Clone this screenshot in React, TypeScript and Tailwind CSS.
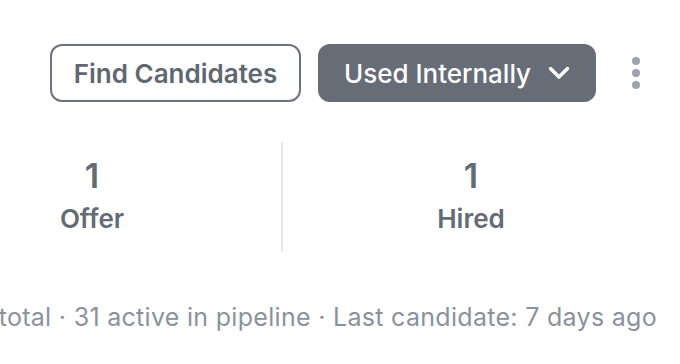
export default function App() {
  return (
    <div className="w-[680px] h-[364px] bg-white overflow-hidden font-['Inter',sans-serif]">
      {/* Header actions */}
      <div className="flex items-center justify-end pt-[44px] pr-[40px]">
        <button className="h-[58px] w-[251px] rounded-[12px] border-2 border-[#6b7280] text-[#5f6771] text-[26px] font-semibold">
          Find Candidates
        </button>
        <button className="ml-[17px] h-[58px] w-[278px] rounded-[12px] bg-[#666d77] text-white text-[26px] font-medium flex items-center justify-center gap-[17px]">
          Used Internally
          <svg width="22" height="14" viewBox="0 0 22 14" fill="none">
            <polyline
              points="2.5,2.5 11,11 19.5,2.5"
              stroke="white"
              strokeWidth="3.5"
              strokeLinecap="round"
              strokeLinejoin="round"
            />
          </svg>
        </button>
        <div className="ml-[36px] flex flex-col gap-[4px]">
          <span className="w-[8px] h-[8px] rounded-full bg-[#9ca3af]" />
          <span className="w-[8px] h-[8px] rounded-full bg-[#9ca3af]" />
          <span className="w-[8px] h-[8px] rounded-full bg-[#9ca3af]" />
        </div>
      </div>

      {/* Stats */}
      <div className="flex ml-[-97px] mt-[40px] h-[110px]">
        <div className="w-[378px] flex flex-col items-center pt-[14px]">
          <span className="text-[34px] leading-[40px] font-semibold text-[#636b74]">1</span>
          <span className="text-[26px] leading-[30px] font-semibold text-[#636b74] mt-[8px]">Offer</span>
        </div>
        <div className="w-[378px] border-l-2 border-[#e5e7eb] flex flex-col items-center pt-[14px]">
          <span className="text-[34px] leading-[40px] font-semibold text-[#636b74]">1</span>
          <span className="text-[26px] leading-[30px] font-semibold text-[#636b74] mt-[8px]">Hired</span>
        </div>
      </div>

      {/* Summary */}
      <div className="mt-[50px] pr-[23px] flex justify-end whitespace-nowrap text-[25px] leading-[30px] tracking-[0.3px] text-[#8b929c]">
        total · 31 active in pipeline · Last candidate: 7 days ago
      </div>
    </div>
  );
}
